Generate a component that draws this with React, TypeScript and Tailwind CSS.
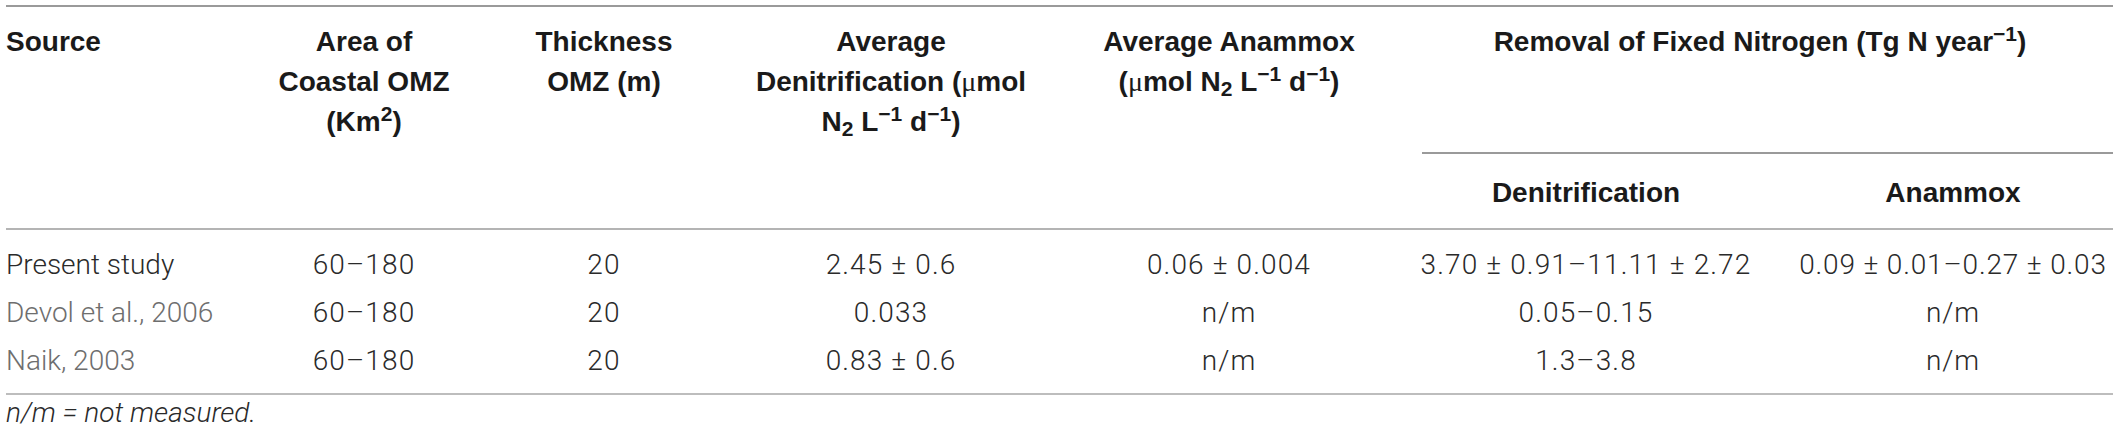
const COLS = 'grid grid-cols-[234px_248px_232px_342px_334px_380px_337px]'

type Row = {
  source: string
  muted?: boolean
  area: string
  thick: string
  denit: string
  anammox: string
  remDenit: string
  remAnammox: string
}

const ROWS: Row[] = [
  {
    source: 'Present study',
    area: '60–180',
    thick: '20',
    denit: '2.45 ± 0.6',
    anammox: '0.06 ± 0.004',
    remDenit: '3.70 ± 0.91–11.11 ± 2.72',
    remAnammox: '0.09 ± 0.01–0.27 ± 0.03',
  },
  {
    source: 'Devol et al., 2006',
    muted: true,
    area: '60–180',
    thick: '20',
    denit: '0.033',
    anammox: 'n/m',
    remDenit: '0.05–0.15',
    remAnammox: 'n/m',
  },
  {
    source: 'Naik, 2003',
    muted: true,
    area: '60–180',
    thick: '20',
    denit: '0.83 ± 0.6',
    anammox: 'n/m',
    remDenit: '1.3–3.8',
    remAnammox: 'n/m',
  },
]

function Mu() {
  return <span className="font-normal font-['Liberation_Serif',serif]">μ</span>
}

function Unit() {
  // N2 L-1 d-1
  return (
    <>
      N<sub>2</sub> L<sup>−1</sup> d<sup>−1</sup>
    </>
  )
}

export default function App() {
  return (
    <div className="w-[2118px] h-[438px] bg-white">
      <div className="ml-[6px] w-[2107px]">
        {/* top rule */}
        <div className="mt-[5px] h-[2px] bg-[#9a9a9a]" />

        {/* header */}
        <div
          className={`${COLS} grid-rows-[147px_74px] font-['Liberation_Sans',Arial,sans-serif] font-bold text-[28px] leading-[40px] text-[#1a1a1a]`}
        >
          <div className="row-span-2 pt-[15px]">Source</div>
          <div className="row-span-2 pt-[15px] text-center">
            Area of
            <br />
            Coastal OMZ
            <br />
            (Km<sup>2</sup>)
          </div>
          <div className="row-span-2 pt-[15px] text-center">
            Thickness
            <br />
            OMZ (m)
          </div>
          <div className="row-span-2 pt-[15px] text-center">
            Average
            <br />
            Denitrification (<Mu />mol
            <br />
            <Unit />)
          </div>
          <div className="row-span-2 pt-[15px] text-center">
            Average Anammox
            <br />
            (<Mu />mol <Unit />)
          </div>
          <div className="col-span-2 flex flex-col">
            <div className="pt-[15px] pl-[11px] text-center">
              Removal of Fixed Nitrogen (Tg N year<sup>−1</sup>)
            </div>
            <div className="mt-auto ml-[26px] h-[2px] bg-[#9a9a9a]" />
          </div>
          <div className="pt-[19px] text-center">Denitrification</div>
          <div className="pt-[19px] pl-[17px] text-center">Anammox</div>
        </div>

        <div className="h-[2px] bg-[#b4b4b4]" />

        {/* body */}
        <div className="pt-[11px] pb-[8px] font-['Roboto',sans-serif] font-light text-[28px] leading-[48px] text-[#2a2a2a]">
          {ROWS.map(r => (
            <div key={r.source} className={`${COLS} h-[48px]`}>
              <div className={r.muted ? 'text-[#6e6e6e]' : ''}>{r.source}</div>
              <div className="text-center tracking-[0.04em]">{r.area}</div>
              <div className="text-center tracking-[0.04em]">{r.thick}</div>
              <div className="text-center tracking-[0.04em]">{r.denit}</div>
              <div className="text-center tracking-[0.04em]">{r.anammox}</div>
              <div className="text-center tracking-[0.04em] whitespace-nowrap">{r.remDenit}</div>
              <div className="pl-[17px] text-center tracking-[0.03em] whitespace-nowrap">{r.remAnammox}</div>
            </div>
          ))}
        </div>

        <div className="h-[2px] bg-[#bdbdbd]" />

        <p className="mt-[2px] font-['Roboto',sans-serif] font-light italic text-[28px] leading-[32px] text-[#2a2a2a]">
          n/m = not measured.
        </p>
      </div>
    </div>
  )
}
